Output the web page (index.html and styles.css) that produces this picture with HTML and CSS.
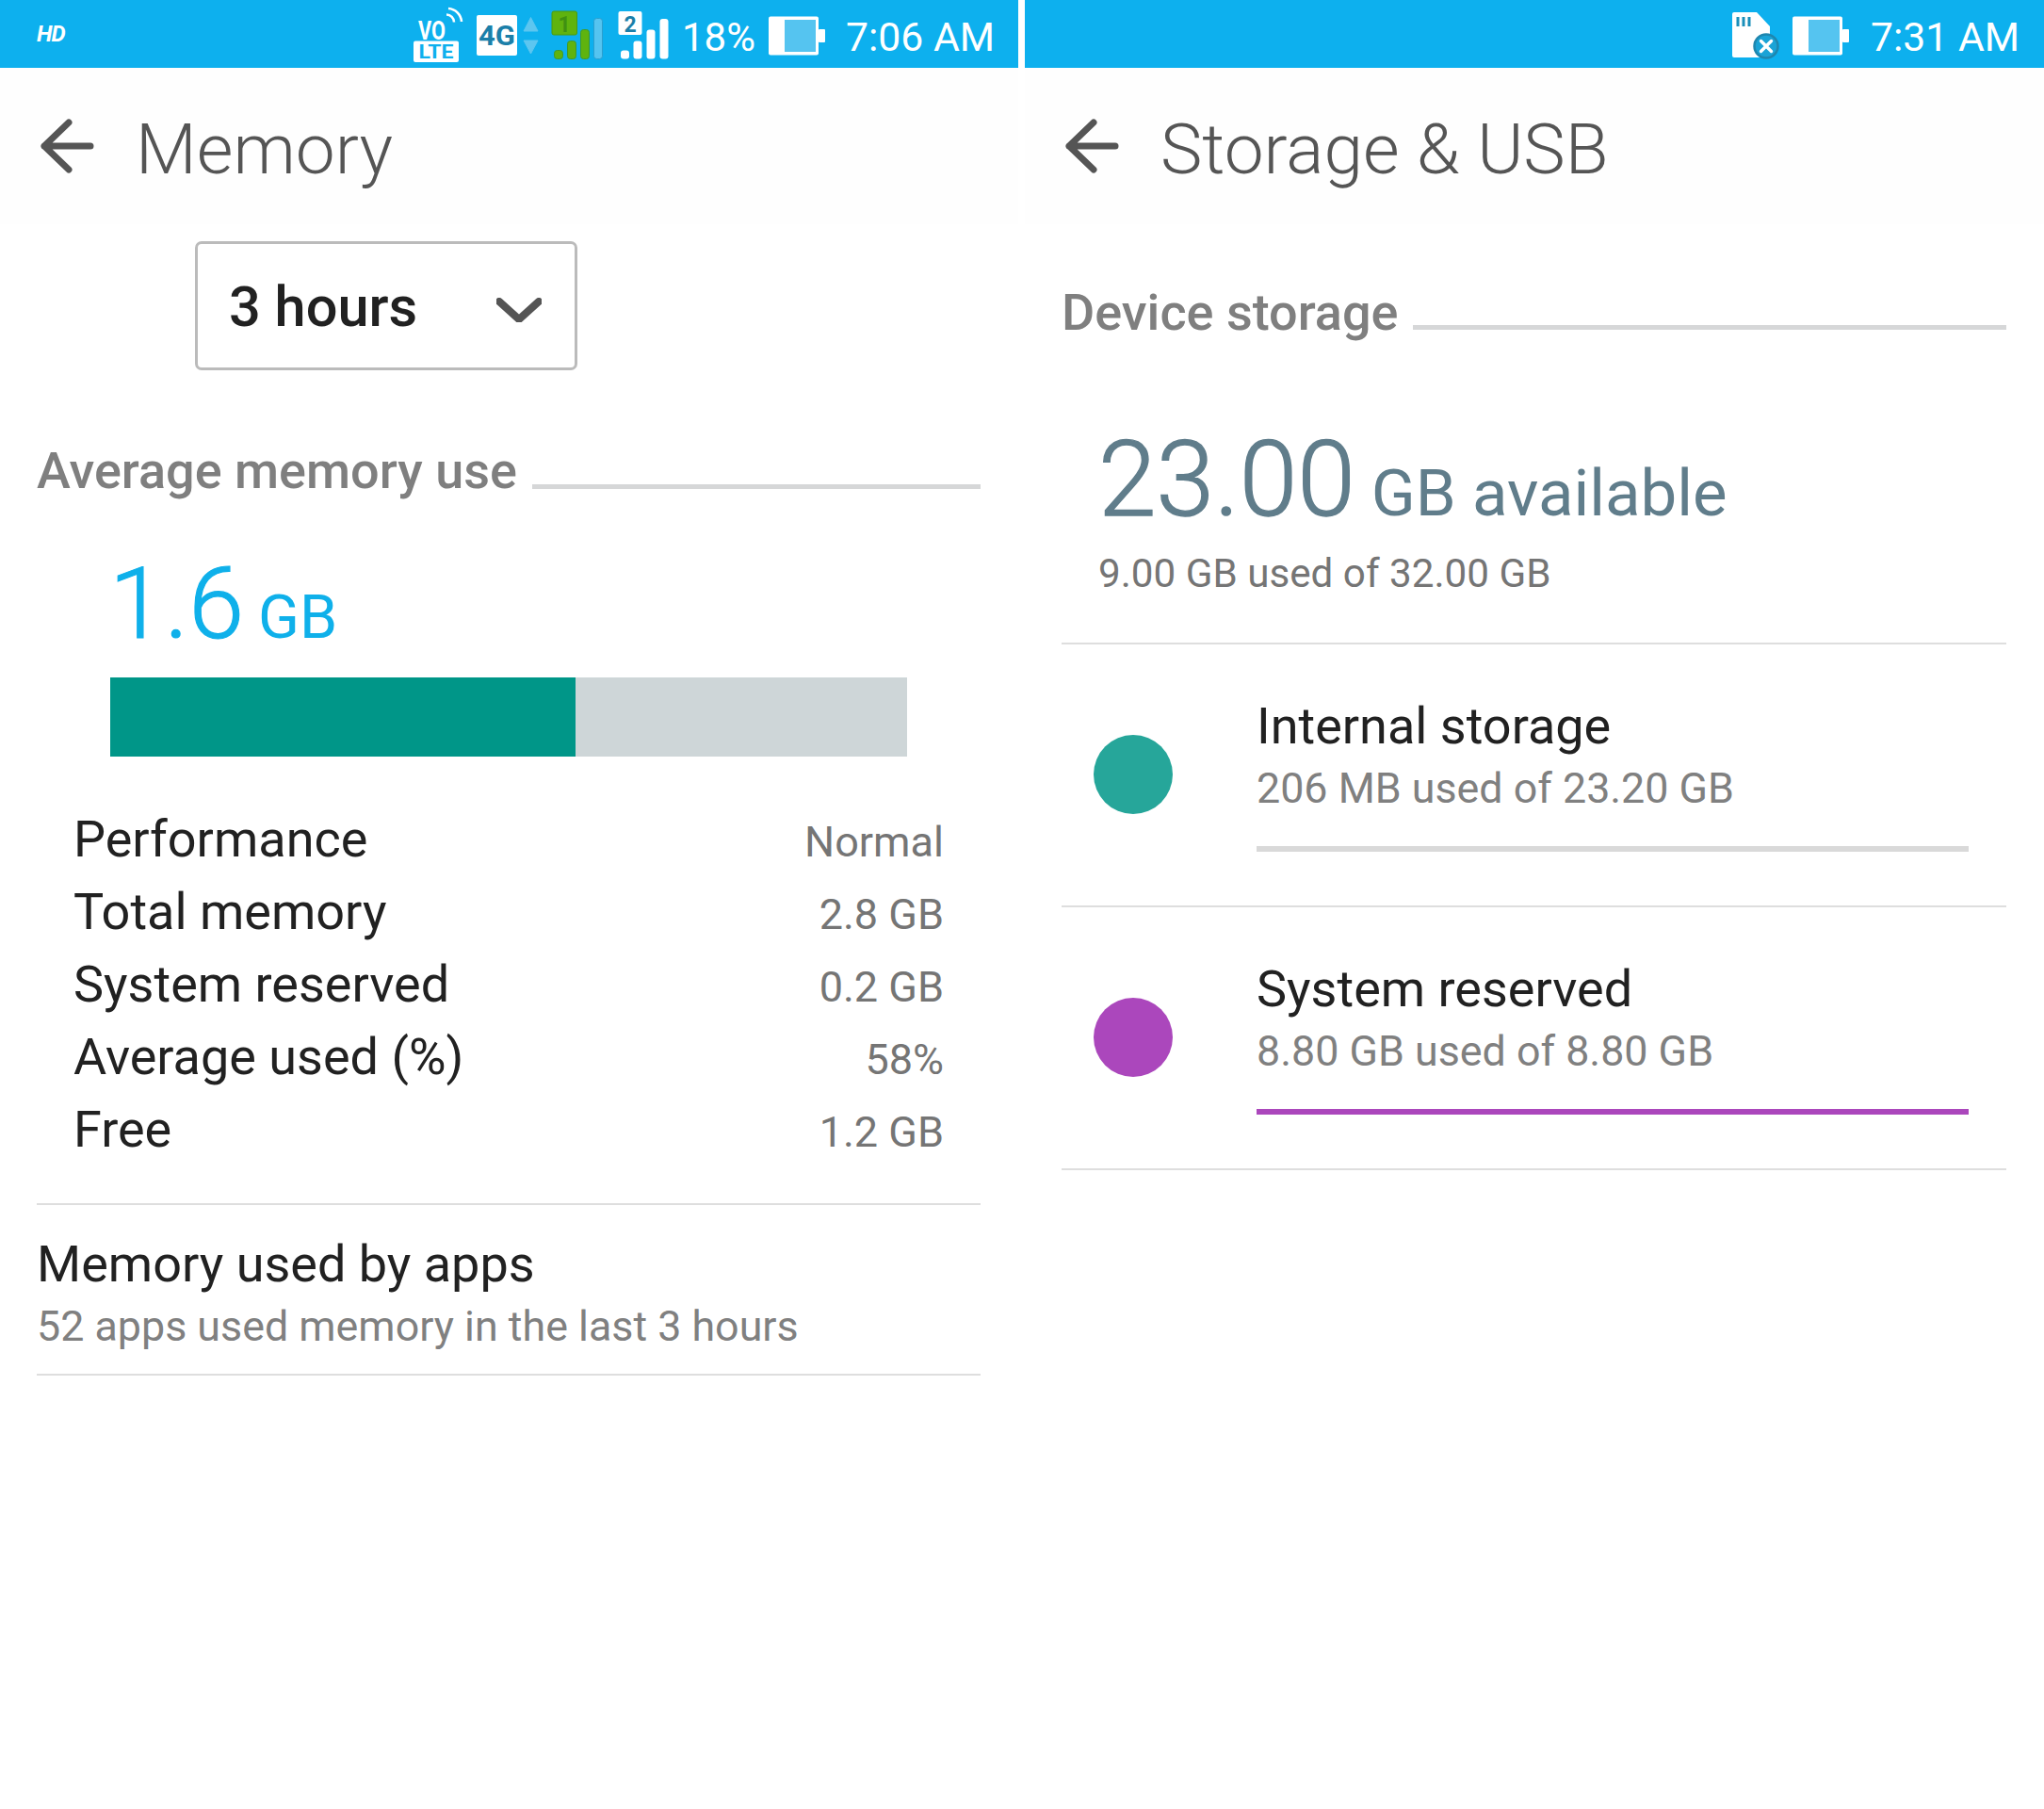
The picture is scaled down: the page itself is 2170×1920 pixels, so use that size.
FILE: index.html
```html
<!DOCTYPE html>
<html lang="en">
<head>
<meta charset="utf-8">
<title>Memory and Storage</title>
<link rel="stylesheet" href="styles.css">
</head>
<body>
<main class="screens">
  <section class="panel">
    <div class="status status-left">
      <span class="hd">HD</span>
      <svg class="net-icons" viewBox="0 0 271 72" aria-hidden="true">
        <text class="ic-vo" x="5" y="42" textLength="29" lengthAdjust="spacingAndGlyphs">VO</text>
        <path class="ic-wave" d="M35 15.5A8 8 0 0 1 43 23.5M37 9A15 15 0 0 1 51 23"/>
        <rect class="ic-white" x="0" y="43.500" width="48" height="22.500" rx="2"/>
        <text class="ic-lte" x="24" y="62" text-anchor="middle" textLength="37" lengthAdjust="spacingAndGlyphs">LTE</text>
        <rect class="ic-white" x="67" y="16" width="43" height="43" rx="2"/>
        <text class="ic-4g" x="88.500" y="48" text-anchor="middle" textLength="39" lengthAdjust="spacingAndGlyphs">4G</text>
        <path class="ic-arrow" d="M124.500 18.500L132 33H117ZM117 43H132L124.500 57Z"/>
        <rect class="ic-green-box" x="147" y="12" width="26.500" height="25" rx="2"/>
        <text class="ic-one" x="160" y="34" text-anchor="middle">1</text>
        <rect class="ic-green" x="149.500" y="53.500" width="9" height="9" rx="3"/>
        <rect class="ic-green" x="163.500" y="43.500" width="9" height="19" rx="3"/>
        <rect class="ic-green" x="177.500" y="31.500" width="9" height="31" rx="3"/>
        <rect class="ic-blue" x="191.500" y="19.500" width="9" height="43" rx="3"/>
        <rect class="ic-white" x="217.500" y="12" width="25" height="25" rx="2"/>
        <text class="ic-two" x="230" y="34" text-anchor="middle">2</text>
        <rect class="ic-white" x="220" y="53.500" width="9" height="9" rx="3"/>
        <rect class="ic-white" x="233.500" y="43.500" width="9" height="19" rx="3"/>
        <rect class="ic-white" x="247.500" y="31.500" width="9" height="31" rx="3"/>
        <rect class="ic-white" x="261.500" y="20" width="9" height="42.500" rx="3"/>
      </svg>
      <span class="pct">18%</span>
      <svg class="battery" viewBox="0 0 60 72" aria-hidden="true">
        <rect class="ic-white" x="0" y="17.500" width="53" height="41" rx="2"/>
        <rect class="ic-white" x="53" y="31" width="7" height="14" rx="1"/>
        <rect class="ic-blue-fill" x="17" y="21" width="33" height="34"/>
      </svg>
      <span class="time">7:06 AM</span>
    </div>
    <header class="appbar">
      <svg class="back" viewBox="0 0 60 60" aria-hidden="true"><path d="M31 5L5 30L31 55M5 30H54"/></svg>
      <h1 class="appbar-title title-memory">Memory</h1>
    </header>
    <div class="body">
      <div class="select">
        <span class="select-value">3 hours</span>
        <svg class="chevron" viewBox="0 0 48 26" aria-hidden="true"><path d="M3 4L24 23L45 4"/></svg>
      </div>
      <div class="section-head head-memory">
        <h2 class="section-title">Average memory use</h2>
        <span class="section-line"></span>
      </div>
      <div class="avg"><span class="avg-num">1.6</span><span class="avg-unit">GB</span></div>
      <div class="meter"><span class="meter-fill"></span></div>
      <dl class="stats">
        <div class="stat"><dt>Performance</dt><dd>Normal</dd></div>
        <div class="stat"><dt>Total memory</dt><dd>2.8 GB</dd></div>
        <div class="stat"><dt>System reserved</dt><dd>0.2 GB</dd></div>
        <div class="stat"><dt>Average used (%)</dt><dd>58%</dd></div>
        <div class="stat"><dt>Free</dt><dd>1.2 GB</dd></div>
      </dl>
      <div class="apps">
        <div class="row-title">Memory used by apps</div>
        <div class="row-sub">52 apps used memory in the last 3 hours</div>
      </div>
    </div>
  </section>

  <section class="panel">
    <div class="status status-right">
      <svg class="sd" viewBox="0 0 50 50" aria-hidden="true">
        <path class="ic-white" d="M2 0H26L40 15V48H2Q0 48 0 46V2Q0 0 2 0Z"/>
        <path class="ic-slot" d="M6 5V15M12 5V15M18 5V15"/>
        <circle class="ic-x-ring" cx="36" cy="36" r="12.500"/>
        <path class="ic-x" d="M30.500 30.500L41.500 41.500M41.500 30.500L30.500 41.500"/>
      </svg>
      <svg class="battery" viewBox="0 0 60 72" aria-hidden="true">
        <rect class="ic-white" x="0" y="17.500" width="53" height="41" rx="2"/>
        <rect class="ic-white" x="53" y="31" width="7" height="14" rx="1"/>
        <rect class="ic-blue-fill" x="17" y="21" width="33" height="34"/>
      </svg>
      <span class="time">7:31 AM</span>
    </div>
    <header class="appbar">
      <svg class="back" viewBox="0 0 60 60" aria-hidden="true"><path d="M31 5L5 30L31 55M5 30H54"/></svg>
      <h1 class="appbar-title">Storage &amp; USB</h1>
    </header>
    <div class="body">
      <div class="section-head head-storage">
        <h2 class="section-title">Device storage</h2>
        <span class="section-line"></span>
      </div>
      <div class="free"><span class="free-num">23.00</span><span class="free-unit">GB available</span></div>
      <div class="free-sub">9.00 GB used of 32.00 GB</div>
      <div class="volumes">
        <div class="volume">
          <span class="dot dot-teal"></span>
          <div class="volume-text">
            <div class="row-title">Internal storage</div>
            <div class="row-sub">206 MB used of 23.20 GB</div>
            <div class="volume-bar"></div>
          </div>
        </div>
        <div class="volume">
          <span class="dot dot-purple"></span>
          <div class="volume-text">
            <div class="row-title">System reserved</div>
            <div class="row-sub">8.80 GB used of 8.80 GB</div>
            <div class="volume-bar volume-bar-full"></div>
          </div>
        </div>
      </div>
    </div>
  </section>
</main>
</body>
</html>
```
FILE: styles.css
```css
* { box-sizing: border-box; }
html, body { margin: 0; padding: 0; background: #fff; }
body { width: 2170px; height: 1920px; overflow: hidden; font-family: Roboto, "Liberation Sans", sans-serif; color: #212121; }

.screens { display: grid; grid-template-columns: 1081px 1082px; column-gap: 7px; }
.panel { min-width: 0; }

.status { height: 72px; background: #0db0ee; display: flex; align-items: center; color: #fff; }
.status-left { padding-left: 39px; }
.status-right { justify-content: flex-end; padding-right: 26px; }
.hd { font-size: 24px; font-weight: 700; font-style: italic; letter-spacing: -1px; width: 400px; line-height: 1; }
.net-icons { width: 271px; height: 72px; flex: none; }
.pct { font-size: 42px; margin: 6px 0 0 14px; width: 92px; flex: none; }
.time { font-size: 42.7px; margin: 6px 0 0 22px; white-space: nowrap; flex: none; }
.status-right .time { margin-left: 23px; }
.battery { width: 60px; height: 72px; flex: none; }
.sd { width: 50px; height: 50px; flex: none; margin: 4px 14px 0 0; }

.ic-white { fill: #fff; }
.ic-vo { font: 700 27px Roboto, sans-serif; fill: #fff; }
.ic-lte { font: 700 20px Roboto, sans-serif; fill: #0db0ee; }
.ic-4g { font: 700 29px Roboto, sans-serif; fill: #1b7fa9; }
.ic-wave { fill: none; stroke: #fff; stroke-width: 2.6; }
.ic-arrow { fill: #5cc6f0; stroke: #5cc6f0; stroke-width: 1; stroke-linejoin: round; }
.ic-green-box { fill: #5fb30f; stroke: #4b9a12; stroke-width: 1; }
.ic-green { fill: #5fb30f; stroke: #3f9a2a; stroke-width: 1; }
.ic-blue { fill: #55c4f0; stroke: #2a9fcf; stroke-width: 1; }
.ic-one { font: 700 23px Roboto, sans-serif; fill: #3f9112; }
.ic-two { font: 700 23px Roboto, sans-serif; fill: #1b7fa9; }
.ic-blue-fill { fill: #55c4f0; }
.ic-slot { fill: none; stroke: #1b8fba; stroke-width: 3; }
.ic-x-ring { fill: #1aa3d6; stroke: #1f86ae; stroke-width: 2.5; }
.ic-x { fill: none; stroke: #fff; stroke-width: 3.4; stroke-linecap: round; }

.appbar { height: 166px; background: #fefefe; display: flex; align-items: center; padding-left: 42px; }
.back { width: 60px; height: 60px; flex: none; }
.back path { fill: none; stroke: #555; stroke-width: 7; stroke-linecap: round; stroke-linejoin: round; }
.appbar-title { margin: 0 0 0 42px; padding-top: 7px; font-size: 74.8px; font-weight: 300; line-height: 90px; color: #555; }
.title-memory { margin-left: 42px; }

.body { padding: 0 40px 0 39px; }

.select { width: 406px; height: 137px; margin: 18px 0 0 168px; border: 3px solid #bbb; border-radius: 7px; display: flex; align-items: center; padding: 0 36px 0 33px; justify-content: space-between; background: #fff; }
.select-value { font-size: 59.5px; font-weight: 500; color: #212121; margin-top: 3px; }
.chevron { width: 48px; height: 26px; flex: none; margin: 8px -1px 0 0; }
.chevron path { fill: none; stroke: #555; stroke-width: 8; stroke-linecap: round; stroke-linejoin: round; }

.section-head { display: flex; align-items: flex-start; gap: 16px; }
.head-memory { margin-top: 77px; }
.head-storage { margin-top: 64px; gap: 15px; }
.section-title { margin: 0; font-size: 54px; font-weight: 500; line-height: 60px; color: #7f7f7f; white-space: nowrap; }
.section-line { flex: 1; height: 5px; background: #d6d7d8; margin-top: 44px; }
.head-storage .section-line { margin-top: 43px; }

.avg { margin: 61px 0 0 77px; height: 100px; line-height: 100px; color: #0fb0ea; white-space: nowrap; }
.avg-num { font-size: 106px; font-weight: 300; -webkit-text-stroke: 1.2px currentColor; }
.avg-unit { font-size: 64.5px; margin-left: 15px; }

.meter { margin: 28px 0 0 78px; width: 846px; height: 84px; background: #ced6d8; display: flex; }
.meter-fill { width: 494px; background: #009688; }

.stats { margin: 49px 0 0; padding: 0 39px 0 39px; }
.stat { display: flex; justify-content: space-between; align-items: baseline; height: 77px; line-height: 77px; }
.stat dt { font-size: 54px; color: #212121; }
.stat dd { margin: 0; font-size: 45px; color: #757575; }

.apps { margin-top: 40px; border-top: 2px solid #dedede; border-bottom: 2px solid #dedede; padding: 31px 0 22px; }
.apps .row-sub { margin-top: 6px; }

.row-title { font-size: 54px; line-height: 64px; color: #212121; white-space: nowrap; }
.row-sub { font-size: 44.8px; line-height: 56px; margin-top: 5px; color: #808080; white-space: nowrap; }

.free { margin: 87px 0 0 39px; height: 120px; line-height: 120px; color: #607d8b; white-space: nowrap; }
.free-num { font-size: 111px; font-weight: 300; -webkit-text-stroke: 1.4px currentColor; }
.free-unit { font-size: 69px; margin-left: 17px; }
.free-sub { margin: 12px 0 0 39px; font-size: 42.2px; line-height: 56px; color: #757575; }

.volumes { margin-top: 45px; border-top: 2px solid #dedede; }
.volume { display: flex; align-items: center; padding: 55px 40px 57px 34px; border-bottom: 2px solid #dedede; }
.dot { width: 84px; height: 84px; border-radius: 50%; flex: none; margin-right: 89px; }
.dot-teal { background: #26a69a; }
.dot-purple { background: #ab47bc; }
.volume-text { flex: 1; min-width: 0; }
.volume-text .row-sub { margin-top: 6px; }
.volume-bar { height: 6px; margin-top: 33px; background: #d9d9d9; }
.volume-bar-full { background: #ab47bc; }
```
